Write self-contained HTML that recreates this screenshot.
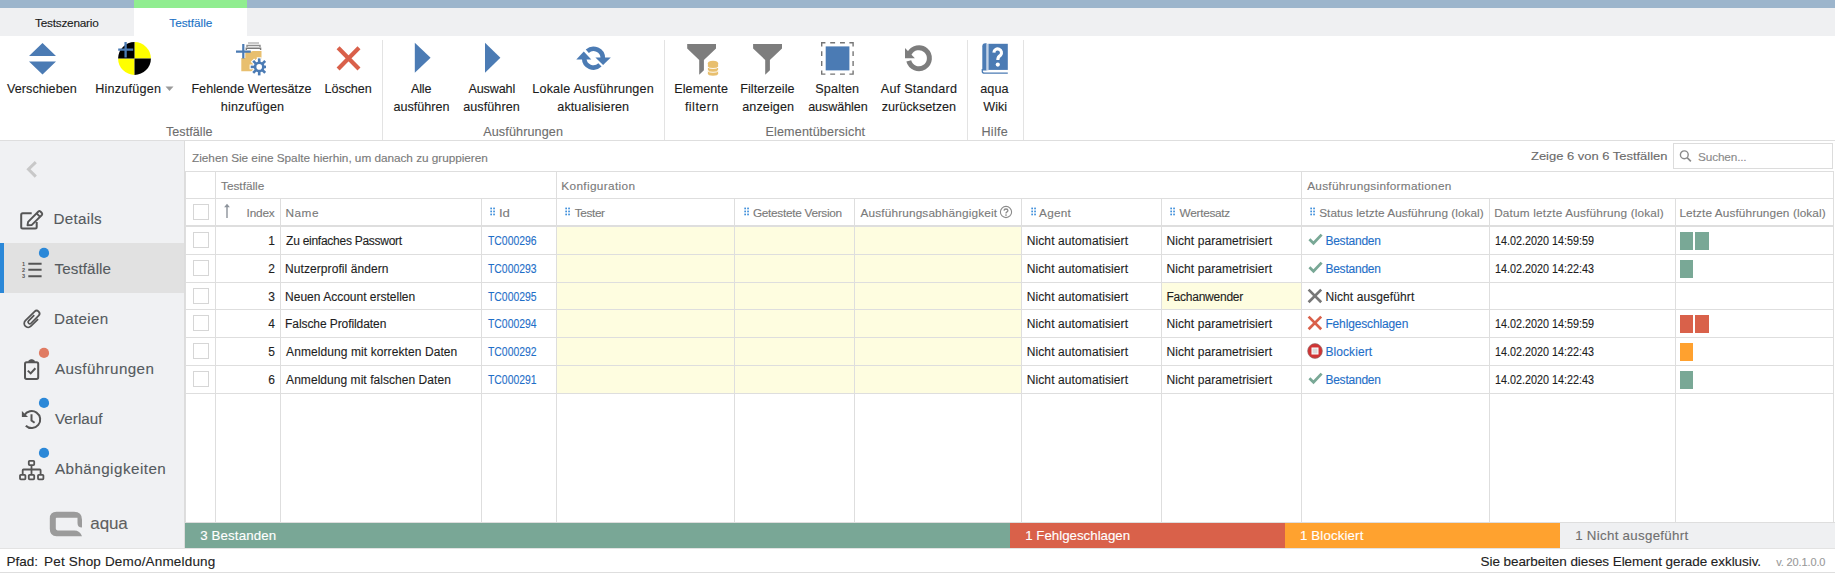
<!DOCTYPE html>
<html><head><meta charset="utf-8"><title>Testfälle</title>
<style>
html,body{margin:0;padding:0}
body{width:1835px;height:573px;position:relative;overflow:hidden;background:#fff;font-family:"Liberation Sans",sans-serif}
.r{position:absolute;display:block}
.t{position:absolute;white-space:nowrap;font-family:"Liberation Sans",sans-serif;-webkit-text-stroke:0.12px currentColor}
</style></head><body>
<div class="r" style="left:0px;top:0px;width:1835px;height:8px;background:#9cb5cc;"></div>
<div class="r" style="left:134px;top:0px;width:113px;height:8px;background:#90ed90;"></div>
<div class="r" style="left:0px;top:8px;width:1835px;height:28px;background:#eff0f2;"></div>
<div class="r" style="left:134px;top:8px;width:113px;height:28px;background:#ffffff;"></div>
<div class="r" style="left:0px;top:140px;width:1835px;height:1px;background:#dedede;"></div>
<div class="r" style="left:382px;top:40px;width:1px;height:100px;background:#e3e3e3;"></div>
<div class="r" style="left:664px;top:40px;width:1px;height:100px;background:#e3e3e3;"></div>
<div class="r" style="left:967px;top:40px;width:1px;height:100px;background:#e3e3e3;"></div>
<div class="r" style="left:1023px;top:40px;width:1px;height:100px;background:#e3e3e3;"></div>
<div class="r" style="left:0px;top:141px;width:184px;height:407px;background:#f0f1f3;"></div>
<div class="r" style="left:184px;top:141px;width:1px;height:407px;background:#dcdcdc;"></div>
<div class="r" style="left:0px;top:243px;width:184px;height:50px;background:#e1e1e1;"></div>
<div class="r" style="left:0px;top:243px;width:4px;height:50px;background:#2b88d8;"></div>
<div class="r" style="left:185px;top:141px;width:1650px;height:30px;background:#ffffff;"></div>
<div class="r" style="left:185px;top:171px;width:1648px;height:1px;background:#dedede;"></div>
<div class="r" style="left:185px;top:171px;width:1px;height:351px;background:#dedede;"></div>
<div class="r" style="left:1833px;top:171px;width:1px;height:351px;background:#dedede;"></div>
<div class="r" style="left:186px;top:198px;width:1647px;height:1px;background:#dedede;"></div>
<div class="r" style="left:186px;top:225px;width:1647px;height:2px;background:#dedede;"></div>
<div class="r" style="left:185px;top:522px;width:1650px;height:1px;background:#dedede;"></div>
<div class="r" style="left:215px;top:172px;width:1px;height:26px;background:#dedede;"></div>
<div class="r" style="left:556px;top:172px;width:1px;height:26px;background:#dedede;"></div>
<div class="r" style="left:1301px;top:172px;width:1px;height:26px;background:#dedede;"></div>
<div class="r" style="left:215px;top:199px;width:1px;height:323px;background:#dedede;"></div>
<div class="r" style="left:280px;top:199px;width:1px;height:323px;background:#dedede;"></div>
<div class="r" style="left:481px;top:199px;width:1px;height:323px;background:#dedede;"></div>
<div class="r" style="left:556px;top:199px;width:1px;height:323px;background:#dedede;"></div>
<div class="r" style="left:734px;top:199px;width:1px;height:323px;background:#dedede;"></div>
<div class="r" style="left:854px;top:199px;width:1px;height:323px;background:#dedede;"></div>
<div class="r" style="left:1021px;top:199px;width:1px;height:323px;background:#dedede;"></div>
<div class="r" style="left:1161px;top:199px;width:1px;height:323px;background:#dedede;"></div>
<div class="r" style="left:1301px;top:199px;width:1px;height:323px;background:#dedede;"></div>
<div class="r" style="left:1489px;top:199px;width:1px;height:323px;background:#dedede;"></div>
<div class="r" style="left:1675px;top:199px;width:1px;height:323px;background:#dedede;"></div>
<div class="r" style="left:557px;top:227px;width:177px;height:27px;background:#fefde0;"></div>
<div class="r" style="left:735px;top:227px;width:119px;height:27px;background:#fefde0;"></div>
<div class="r" style="left:855px;top:227px;width:166px;height:27px;background:#fefde0;"></div>
<div class="r" style="left:557px;top:255px;width:177px;height:27px;background:#fefde0;"></div>
<div class="r" style="left:735px;top:255px;width:119px;height:27px;background:#fefde0;"></div>
<div class="r" style="left:855px;top:255px;width:166px;height:27px;background:#fefde0;"></div>
<div class="r" style="left:557px;top:283px;width:177px;height:26px;background:#fefde0;"></div>
<div class="r" style="left:735px;top:283px;width:119px;height:26px;background:#fefde0;"></div>
<div class="r" style="left:855px;top:283px;width:166px;height:26px;background:#fefde0;"></div>
<div class="r" style="left:1162px;top:283px;width:139px;height:26px;background:#fefde0;"></div>
<div class="r" style="left:557px;top:310px;width:177px;height:27px;background:#fefde0;"></div>
<div class="r" style="left:735px;top:310px;width:119px;height:27px;background:#fefde0;"></div>
<div class="r" style="left:855px;top:310px;width:166px;height:27px;background:#fefde0;"></div>
<div class="r" style="left:557px;top:338px;width:177px;height:27px;background:#fefde0;"></div>
<div class="r" style="left:735px;top:338px;width:119px;height:27px;background:#fefde0;"></div>
<div class="r" style="left:855px;top:338px;width:166px;height:27px;background:#fefde0;"></div>
<div class="r" style="left:557px;top:366px;width:177px;height:27px;background:#fefde0;"></div>
<div class="r" style="left:735px;top:366px;width:119px;height:27px;background:#fefde0;"></div>
<div class="r" style="left:855px;top:366px;width:166px;height:27px;background:#fefde0;"></div>
<div class="r" style="left:186px;top:254px;width:1647px;height:1px;background:#dedede;"></div>
<div class="r" style="left:186px;top:282px;width:1647px;height:1px;background:#dedede;"></div>
<div class="r" style="left:186px;top:309px;width:1647px;height:1px;background:#dedede;"></div>
<div class="r" style="left:186px;top:337px;width:1647px;height:1px;background:#dedede;"></div>
<div class="r" style="left:186px;top:365px;width:1647px;height:1px;background:#dedede;"></div>
<div class="r" style="left:186px;top:393px;width:1647px;height:1px;background:#dedede;"></div>
<div class="r" style="left:193px;top:204px;width:14px;height:14px;background:#fff;border:1px solid #d6d6d6;box-sizing:content-box;"></div>
<div class="r" style="left:193px;top:232px;width:14px;height:14px;background:#fff;border:1px solid #d6d6d6;box-sizing:content-box;"></div>
<div class="r" style="left:193px;top:260px;width:14px;height:14px;background:#fff;border:1px solid #d6d6d6;box-sizing:content-box;"></div>
<div class="r" style="left:193px;top:288px;width:14px;height:14px;background:#fff;border:1px solid #d6d6d6;box-sizing:content-box;"></div>
<div class="r" style="left:193px;top:315px;width:14px;height:14px;background:#fff;border:1px solid #d6d6d6;box-sizing:content-box;"></div>
<div class="r" style="left:193px;top:343px;width:14px;height:14px;background:#fff;border:1px solid #d6d6d6;box-sizing:content-box;"></div>
<div class="r" style="left:193px;top:371px;width:14px;height:14px;background:#fff;border:1px solid #d6d6d6;box-sizing:content-box;"></div>
<svg class="r" style="left:490px;top:207px;" width="5" height="9" viewBox="0 0 5 9"><rect x="0.3" y="0.6" width="1.7" height="1.7" fill="#3f8fdb"/><rect x="0.3" y="3.6" width="1.7" height="1.7" fill="#3f8fdb"/><rect x="0.3" y="6.6" width="1.7" height="1.7" fill="#3f8fdb"/><rect x="3.2" y="0.6" width="1.7" height="1.7" fill="#3f8fdb"/><rect x="3.2" y="3.6" width="1.7" height="1.7" fill="#3f8fdb"/><rect x="3.2" y="6.6" width="1.7" height="1.7" fill="#3f8fdb"/></svg>
<svg class="r" style="left:565px;top:207px;" width="5" height="9" viewBox="0 0 5 9"><rect x="0.3" y="0.6" width="1.7" height="1.7" fill="#3f8fdb"/><rect x="0.3" y="3.6" width="1.7" height="1.7" fill="#3f8fdb"/><rect x="0.3" y="6.6" width="1.7" height="1.7" fill="#3f8fdb"/><rect x="3.2" y="0.6" width="1.7" height="1.7" fill="#3f8fdb"/><rect x="3.2" y="3.6" width="1.7" height="1.7" fill="#3f8fdb"/><rect x="3.2" y="6.6" width="1.7" height="1.7" fill="#3f8fdb"/></svg>
<svg class="r" style="left:743.5px;top:207px;" width="5" height="9" viewBox="0 0 5 9"><rect x="0.3" y="0.6" width="1.7" height="1.7" fill="#3f8fdb"/><rect x="0.3" y="3.6" width="1.7" height="1.7" fill="#3f8fdb"/><rect x="0.3" y="6.6" width="1.7" height="1.7" fill="#3f8fdb"/><rect x="3.2" y="0.6" width="1.7" height="1.7" fill="#3f8fdb"/><rect x="3.2" y="3.6" width="1.7" height="1.7" fill="#3f8fdb"/><rect x="3.2" y="6.6" width="1.7" height="1.7" fill="#3f8fdb"/></svg>
<svg class="r" style="left:1030.5px;top:207px;" width="5" height="9" viewBox="0 0 5 9"><rect x="0.3" y="0.6" width="1.7" height="1.7" fill="#3f8fdb"/><rect x="0.3" y="3.6" width="1.7" height="1.7" fill="#3f8fdb"/><rect x="0.3" y="6.6" width="1.7" height="1.7" fill="#3f8fdb"/><rect x="3.2" y="0.6" width="1.7" height="1.7" fill="#3f8fdb"/><rect x="3.2" y="3.6" width="1.7" height="1.7" fill="#3f8fdb"/><rect x="3.2" y="6.6" width="1.7" height="1.7" fill="#3f8fdb"/></svg>
<svg class="r" style="left:1170px;top:207px;" width="5" height="9" viewBox="0 0 5 9"><rect x="0.3" y="0.6" width="1.7" height="1.7" fill="#3f8fdb"/><rect x="0.3" y="3.6" width="1.7" height="1.7" fill="#3f8fdb"/><rect x="0.3" y="6.6" width="1.7" height="1.7" fill="#3f8fdb"/><rect x="3.2" y="0.6" width="1.7" height="1.7" fill="#3f8fdb"/><rect x="3.2" y="3.6" width="1.7" height="1.7" fill="#3f8fdb"/><rect x="3.2" y="6.6" width="1.7" height="1.7" fill="#3f8fdb"/></svg>
<svg class="r" style="left:1310px;top:207px;" width="5" height="9" viewBox="0 0 5 9"><rect x="0.3" y="0.6" width="1.7" height="1.7" fill="#3f8fdb"/><rect x="0.3" y="3.6" width="1.7" height="1.7" fill="#3f8fdb"/><rect x="0.3" y="6.6" width="1.7" height="1.7" fill="#3f8fdb"/><rect x="3.2" y="0.6" width="1.7" height="1.7" fill="#3f8fdb"/><rect x="3.2" y="3.6" width="1.7" height="1.7" fill="#3f8fdb"/><rect x="3.2" y="6.6" width="1.7" height="1.7" fill="#3f8fdb"/></svg>
<svg class="r" style="left:223px;top:203px;" width="8" height="16" viewBox="0 0 8 16"><path d="M4 0.8 L6.9 4.3 L4.7 4.3 L4.7 15 L3.3 15 L3.3 4.3 L1.1 4.3 Z" fill="#8d939b"/></svg>
<svg class="r" style="left:999px;top:205px;" width="14" height="14" viewBox="0 0 14 14"><circle cx="7" cy="7" r="5.6" fill="none" stroke="#8a8a8a" stroke-width="1.1"/><path d="M5 5.6 Q5.1 4 7 4 Q8.9 4 8.9 5.5 Q8.9 6.5 7.7 7.1 Q7 7.5 7 8.4" fill="none" stroke="#8a8a8a" stroke-width="1.3"/><circle cx="7" cy="10" r="0.85" fill="#8a8a8a"/></svg>
<div class="r" style="left:1673px;top:143px;width:158px;height:24px;background:#fff;border:1px solid #dcdcdc;box-sizing:content-box;"></div>
<svg class="r" style="left:1678px;top:149px;" width="16" height="16" viewBox="0 0 16 16"><circle cx="6.3" cy="5.8" r="3.9" fill="none" stroke="#8a8a8a" stroke-width="1.4"/><path d="M9.1 8.7 L12.9 12.3" stroke="#8a8a8a" stroke-width="1.6"/></svg>
<svg class="r" style="left:1307px;top:231px;" width="17" height="16" viewBox="0 0 17 16"><path d="M2.4 8.3 L6.5 12.2 L14.6 3.6" fill="none" stroke="#79a896" stroke-width="2.8"/></svg>
<svg class="r" style="left:1307px;top:259px;" width="17" height="16" viewBox="0 0 17 16"><path d="M2.4 8.3 L6.5 12.2 L14.6 3.6" fill="none" stroke="#79a896" stroke-width="2.8"/></svg>
<svg class="r" style="left:1306px;top:287px;" width="18" height="18" viewBox="0 0 18 18"><path d="M2.6 2.6 L15.2 15.2 M15.2 2.6 L2.6 15.2" stroke="#777" stroke-width="2.7"/></svg>
<svg class="r" style="left:1306px;top:314px;" width="18" height="18" viewBox="0 0 18 18"><path d="M2.6 2.6 L15.2 15.2 M15.2 2.6 L2.6 15.2" stroke="#d9604a" stroke-width="2.7"/></svg>
<svg class="r" style="left:1306px;top:342px;" width="18" height="18" viewBox="0 0 18 18"><circle cx="9" cy="9" r="7.4" fill="#d03434" stroke="#8a7070" stroke-width="0.6"/><rect x="6" y="6" width="6" height="6" fill="#dcdcdc" stroke="#fff" stroke-width="1"/></svg>
<svg class="r" style="left:1307px;top:370px;" width="17" height="16" viewBox="0 0 17 16"><path d="M2.4 8.3 L6.5 12.2 L14.6 3.6" fill="none" stroke="#79a896" stroke-width="2.8"/></svg>
<div class="r" style="left:1680px;top:232px;width:13px;height:18px;background:#79a896;"></div>
<div class="r" style="left:1695px;top:232px;width:14px;height:18px;background:#79a896;"></div>
<div class="r" style="left:1680px;top:260px;width:13px;height:18px;background:#79a896;"></div>
<div class="r" style="left:1680px;top:315px;width:13px;height:18px;background:#d9614a;"></div>
<div class="r" style="left:1695px;top:315px;width:14px;height:18px;background:#d9614a;"></div>
<div class="r" style="left:1680px;top:343px;width:13px;height:18px;background:#ffa12f;"></div>
<div class="r" style="left:1680px;top:371px;width:13px;height:18px;background:#79a896;"></div>
<div class="r" style="left:185px;top:523px;width:825px;height:25px;background:#79a796;"></div>
<div class="r" style="left:1010px;top:523px;width:275px;height:25px;background:#d9614a;"></div>
<div class="r" style="left:1285px;top:523px;width:275px;height:25px;background:#ffa22f;"></div>
<div class="r" style="left:1560px;top:523px;width:275px;height:25px;background:#eff0f2;"></div>
<div class="r" style="left:0px;top:548px;width:1835px;height:25px;background:#ffffff;"></div>
<div class="r" style="left:0px;top:548px;width:1835px;height:1px;background:#e3e3e3;"></div>
<div class="r" style="left:0px;top:572px;width:1835px;height:1px;background:#dedede;"></div>
<svg class="r" style="left:28px;top:42px;" width="30" height="34" viewBox="0 0 30 34"><path d="M1 14 L14.5 1 L28 14 Z M1 19.4 L28 19.4 L14.5 32.6 Z" fill="#4b7bb4"/></svg>
<svg class="r" style="left:117px;top:41px;" width="36" height="36" viewBox="0 0 36 36"><path d="M17.5 17.5 L17.5 1.1 A16.4 16.4 0 0 1 33.9 17.5 Z" fill="#ffff00"/><path d="M17.5 17.5 L1.1 17.5 A16.4 16.4 0 0 0 17.5 33.9 Z" fill="#ffff00"/><path d="M17.5 17.5 L17.5 1.1 A16.4 16.4 0 0 0 1.1 17.5 Z" fill="#000"/><path d="M17.5 17.5 L33.9 17.5 A16.4 16.4 0 0 1 17.5 33.9 Z" fill="#000"/><path d="M1.2 8.7 L16.2 8.7 M8.6 1 L8.6 16.4" stroke="#4b7bb4" stroke-width="2.3"/></svg>
<svg class="r" style="left:165px;top:86px;" width="9" height="6" viewBox="0 0 9 6"><path d="M0.5 0.5 L8.5 0.5 L4.5 5 Z" fill="#9a9a9a"/></svg>
<svg class="r" style="left:234px;top:40px;" width="32" height="38" viewBox="0 0 32 38"><path d="M14 3 L25 3" stroke="#bdbdbd" stroke-width="1.6"/><path d="M13 7 L13 5.5 L26 5.5 L26 7" fill="none" stroke="#8f8f8f" stroke-width="1.4"/><path d="M12.3 10 L12.3 8.3 L26.6 8.3 L26.6 10" fill="none" stroke="#7a7a7a" stroke-width="1.4"/><path d="M11.3 10.9 L16.5 10.9 Q17.5 12.3 18.5 10.9 L27.5 10.9 L27.5 19 L22 19 L22 31.2 L7.3 31.2 L7.3 17.9 L11.3 17.9 Z" fill="#e8bf6f"/><path d="M2 11.6 L16.7 11.6 M9.3 4 L9.3 18.6" stroke="#4b7bb4" stroke-width="2.2"/><g transform="translate(25.2,26.9)"><g fill="#fff" stroke="#fff" stroke-width="2.2"><rect x="-1.3" y="-8.5" width="2.6" height="4.5" transform="rotate(0)"/><rect x="-1.3" y="-8.5" width="2.6" height="4.5" transform="rotate(45)"/><rect x="-1.3" y="-8.5" width="2.6" height="4.5" transform="rotate(90)"/><rect x="-1.3" y="-8.5" width="2.6" height="4.5" transform="rotate(135)"/><rect x="-1.3" y="-8.5" width="2.6" height="4.5" transform="rotate(180)"/><rect x="-1.3" y="-8.5" width="2.6" height="4.5" transform="rotate(225)"/><rect x="-1.3" y="-8.5" width="2.6" height="4.5" transform="rotate(270)"/><rect x="-1.3" y="-8.5" width="2.6" height="4.5" transform="rotate(315)"/><circle r="5.4"/></g><g fill="#4b7bb4"><rect x="-1.3" y="-8.5" width="2.6" height="4.5" transform="rotate(0)"/><rect x="-1.3" y="-8.5" width="2.6" height="4.5" transform="rotate(45)"/><rect x="-1.3" y="-8.5" width="2.6" height="4.5" transform="rotate(90)"/><rect x="-1.3" y="-8.5" width="2.6" height="4.5" transform="rotate(135)"/><rect x="-1.3" y="-8.5" width="2.6" height="4.5" transform="rotate(180)"/><rect x="-1.3" y="-8.5" width="2.6" height="4.5" transform="rotate(225)"/><rect x="-1.3" y="-8.5" width="2.6" height="4.5" transform="rotate(270)"/><rect x="-1.3" y="-8.5" width="2.6" height="4.5" transform="rotate(315)"/><circle r="5.4"/></g><circle r="2.8" fill="#fff"/></g></svg>
<svg class="r" style="left:334px;top:44px;" width="28" height="29" viewBox="0 0 28 29"><path d="M4.1 3.8 L25 25 M25 3.8 L4.1 25" stroke="#d9604a" stroke-width="4.2"/></svg>
<svg class="r" style="left:414px;top:42px;" width="18" height="32" viewBox="0 0 18 32"><path d="M0.8 0.7 L16.6 15.7 L0.8 30.8 Z" fill="#4b7bb4"/></svg>
<svg class="r" style="left:484px;top:42px;" width="18" height="32" viewBox="0 0 18 32"><path d="M1 0.7 L16.4 15.7 L1 30.8 Z" fill="#4b7bb4"/></svg>
<svg class="r" style="left:574px;top:44px;" width="40" height="30" viewBox="0 0 40 30"><path d="M13.28 7.29 A9.3 9.3 0 0 1 28.8 14.2" fill="none" stroke="#4b7bb4" stroke-width="4.6"/><path d="M25.96 20.89 A9.3 9.3 0 0 1 10.2 14.2" fill="none" stroke="#4b7bb4" stroke-width="4.6"/><path d="M21.4 13.6 L36.8 13.6 L29.1 21.1 Z" fill="#4b7bb4"/><path d="M2.3 15.5 L17.3 15.5 L9.8 7.6 Z" fill="#4b7bb4"/></svg>
<svg class="r" style="left:686px;top:43px;" width="34" height="34" viewBox="0 0 34 34"><path d="M1.2 1.1 L30 1.1 L30 5.6 L17.9 16.9 L17.9 27.2 L13.2 31.8 L13.2 16.9 L1.2 5.6 Z" fill="#7d7d7d"/><g fill="#e8bf6e"><ellipse cx="27" cy="20.3" rx="5.1" ry="2.6"/><rect x="21.9" y="20.3" width="10.2" height="3.6"/><ellipse cx="27" cy="24.9" rx="5.1" ry="2.2"/><rect x="21.9" y="24.9" width="10.2" height="2.4"/><ellipse cx="27" cy="28.6" rx="5.1" ry="2.2"/><rect x="21.9" y="28.6" width="10.2" height="2.2"/><ellipse cx="27" cy="30.6" rx="5.1" ry="2.2"/></g><path d="M22 24.2 A5.1 1.6 0 0 0 32 24.2 M22 28 A5.1 1.6 0 0 0 32 28" fill="none" stroke="#fff" stroke-width="0.9"/></svg>
<svg class="r" style="left:752px;top:43px;" width="32" height="34" viewBox="0 0 32 34"><path d="M1.1 1.1 L30 1.1 L30 5.6 L17.9 16.9 L17.9 27.2 L13.2 31.8 L13.2 16.9 L1.1 5.6 Z" fill="#7d7d7d"/></svg>
<svg class="r" style="left:820px;top:41px;" width="35" height="35" viewBox="0 0 35 35"><path d="M1.7 5.4 L1.7 1.7 L5.4 1.7 M29.4 1.7 L33.1 1.7 L33.1 5.4 M33.1 29.4 L33.1 33.1 L29.4 33.1 M5.4 33.1 L1.7 33.1 L1.7 29.4 M10.2 1.7 L15.1 1.7 M20 1.7 L24.9 1.7 M10.2 33.1 L15.1 33.1 M20 33.1 L24.9 33.1 M1.7 10.3 L1.7 15.1 M1.7 20 L1.7 24.9 M33.1 10.3 L33.1 15.1 M33.1 20 L33.1 24.9" fill="none" stroke="#767676" stroke-width="1.4"/><rect x="5.7" y="5.4" width="23.7" height="24" fill="#4b7bb4"/></svg>
<svg class="r" style="left:902px;top:42px;" width="34" height="34" viewBox="0 0 34 34"><path d="M6.76 18.92 A10.5 10.5 0 1 0 7.38 11.76" fill="none" stroke="#7d7d7d" stroke-width="5"/><path d="M3 5.95 L3 16.2 L12.9 16.2 Z" fill="#7d7d7d"/></svg>
<svg class="r" style="left:981px;top:42px;" width="28" height="33" viewBox="0 0 28 33"><path d="M1.3 4.3 Q1.3 1.3 4.3 1.3 L5.6 1.3 L5.6 28.4 L1.3 28.4 Z" fill="#4b7bb4"/><rect x="5.6" y="1.8" width="1.9" height="26.6" fill="#c2d2e6"/><rect x="7.5" y="1.8" width="19.3" height="26.1" fill="#4b7bb4"/><path d="M1.3 27 L1.3 29.5 Q1.3 31.2 3.5 31.2 L26.8 31.2" fill="none" stroke="#4b7bb4" stroke-width="1.3"/><path d="M12.9 10.6 A3.8 3.8 0 1 1 19.6 13.2 Q16.8 14.8 16.8 18" fill="none" stroke="#fff" stroke-width="3.1"/><circle cx="16.8" cy="22.6" r="2.1" fill="#fff"/></svg>
<svg class="r" style="left:24px;top:159px;" width="16" height="22" viewBox="0 0 16 22"><path d="M11.8 3.2 L4.5 10.2 L11.8 17.6" fill="none" stroke="#c8c8c8" stroke-width="3"/></svg>
<svg class="r" style="left:18px;top:208px;" width="28" height="25" viewBox="0 0 28 25"><path d="M13.7 5.3 L4.7 5.3 Q3.2 5.3 3.2 6.8 L3.2 19.1 Q3.2 20.6 4.7 20.6 L17.2 20.6 Q18.7 20.6 18.7 19.1 L18.7 14" fill="none" stroke="#555555" stroke-width="2"/><path d="M9.5 17.3 L10.1 13.8 L20.4 3.5 Q21.4 2.7 22.4 3.5 L23.9 5 Q24.7 6 23.9 7 L13.6 17.1 Z M18.6 5.3 L22.1 8.8" fill="none" stroke="#555555" stroke-width="1.9" stroke-linejoin="round"/></svg>
<svg class="r" style="left:19px;top:258px;" width="26" height="22" viewBox="0 0 26 22"><path d="M9.3 5.7 L22.6 5.7 M9.3 11.8 L22.6 11.8 M9.3 18.3 L22.6 18.3" stroke="#555555" stroke-width="2.1"/><text x="4.5" y="8.2" font-size="5.6" font-family="Liberation Sans" font-weight="bold" fill="#555555" text-anchor="middle">1</text><text x="4.5" y="14.2" font-size="5.6" font-family="Liberation Sans" font-weight="bold" fill="#555555" text-anchor="middle">2</text><text x="4.5" y="20.2" font-size="5.6" font-family="Liberation Sans" font-weight="bold" fill="#555555" text-anchor="middle">3</text></svg>
<svg class="r" style="left:38px;top:247px;" width="12" height="12" viewBox="0 0 12 12"><circle cx="6" cy="5.90" r="5.1" fill="#2b88d8"/></svg>
<svg class="r" style="left:38px;top:347px;" width="12" height="12" viewBox="0 0 12 12"><circle cx="6" cy="5.90" r="5.1" fill="#e07b62"/></svg>
<svg class="r" style="left:38px;top:397px;" width="12" height="12" viewBox="0 0 12 12"><circle cx="6" cy="5.90" r="5.1" fill="#2b88d8"/></svg>
<svg class="r" style="left:38px;top:447px;" width="12" height="12" viewBox="0 0 12 12"><circle cx="6" cy="5.90" r="5.1" fill="#2b88d8"/></svg>
<svg class="r" style="left:19px;top:306px;" width="26" height="28" viewBox="0 0 26 28"><g transform="rotate(45 13 14)"><path d="M16.6 9 L16.6 19.2 A3.9 3.9 0 0 1 8.8 19.2 L8.8 6.2 A2.9 2.9 0 0 1 14.6 6.2 L14.6 17 A1.7 1.7 0 0 1 11.2 17 L11.2 9" fill="none" stroke="#555555" stroke-width="1.75"/></g></svg>
<svg class="r" style="left:22px;top:358px;" width="19" height="24" viewBox="0 0 19 24"><rect x="3" y="4.3" width="13.2" height="16.6" rx="1.6" fill="none" stroke="#555555" stroke-width="2"/><path d="M7 4.3 L7 3 Q9.6 0.6 12.2 3 L12.2 4.3 Z" fill="#555555" stroke="#555555" stroke-width="1.2"/><path d="M5.8 12.6 L8.7 15.4 L13.4 10.3" fill="none" stroke="#555555" stroke-width="2"/></svg>
<svg class="r" style="left:20px;top:408px;" width="26" height="24" viewBox="0 0 26 24"><path d="M4.34 7.35 A8.5 8.5 0 1 1 5.8 17.71" fill="none" stroke="#555555" stroke-width="2"/><path d="M1.9 3 L1.9 8.9 L8 8.9 Z" fill="#555555"/><path d="M11.5 6.2 L11.5 12.5 L14.6 14.8" fill="none" stroke="#555555" stroke-width="2"/></svg>
<svg class="r" style="left:17px;top:458px;" width="30" height="24" viewBox="0 0 30 24"><g fill="none" stroke="#555555" stroke-width="1.8"><rect x="11.8" y="2.8" width="5.4" height="4.3" rx="0.8"/><rect x="3" y="16.8" width="5.4" height="4.6" rx="0.8"/><rect x="11.8" y="16.8" width="5.4" height="4.6" rx="0.8"/><rect x="21" y="16.8" width="5.4" height="4.6" rx="0.8"/><path d="M14.5 7.1 L14.5 16.8 M5.7 16.8 L5.7 12.3 Q5.7 11.5 6.5 11.5 L22.8 11.5 Q23.6 11.5 23.6 12.3 L23.6 16.8"/></g></svg>
<svg class="r" style="left:48px;top:510px;" width="36" height="28" viewBox="0 0 36 28"><path d="M8.5 1.8 L26 1.8 Q34 1.8 34 9.8 L34 17.6 Q29.5 17.6 29.5 13 L29.5 7.8 Q29.5 7.8 27 7.8 L8.6 7.8 Q7.8 7.8 7.8 8.6 L7.8 18.6 Q7.8 20.4 9.6 20.4 L26.2 20.4 Q32 20.4 34 26.2 L8.6 26.2 Q1.8 26.2 1.8 18.8 L1.8 8.6 Q1.8 1.8 8.5 1.8 Z" fill="#9b9b9b"/></svg>
<div class="t" style="top:18.00px;font-size:11.8px;line-height:11.8px;color:#1b1b1b;left:35.00px;letter-spacing:-0.227px;">Testszenario</div>
<div class="t" style="top:18.00px;font-size:11.8px;line-height:11.8px;color:#1b72c6;left:169.30px;letter-spacing:-0.025px;">Testfälle</div>
<div class="t" style="top:83.00px;font-size:12.6px;line-height:12.6px;color:#1c1c1c;left:7.10px;letter-spacing:0.030px;">Verschieben</div>
<div class="t" style="top:83.00px;font-size:12.6px;line-height:12.6px;color:#1c1c1c;left:95.30px;letter-spacing:0.211px;">Hinzufügen</div>
<div class="t" style="top:83.00px;font-size:12.6px;line-height:12.6px;color:#1c1c1c;left:191.40px;letter-spacing:0.033px;">Fehlende Wertesätze</div>
<div class="t" style="top:101.00px;font-size:12.6px;line-height:12.6px;color:#1c1c1c;left:220.70px;letter-spacing:0.200px;">hinzufügen</div>
<div class="t" style="top:83.00px;font-size:12.6px;line-height:12.6px;color:#1c1c1c;left:324.60px;letter-spacing:-0.083px;">Löschen</div>
<div class="t" style="top:83.00px;font-size:12.6px;line-height:12.6px;color:#1c1c1c;left:411.00px;letter-spacing:-0.200px;">Alle</div>
<div class="t" style="top:101.00px;font-size:12.6px;line-height:12.6px;color:#1c1c1c;left:393.40px;letter-spacing:0.013px;">ausführen</div>
<div class="t" style="top:83.00px;font-size:12.6px;line-height:12.6px;color:#1c1c1c;left:468.50px;letter-spacing:-0.150px;">Auswahl</div>
<div class="t" style="top:101.00px;font-size:12.6px;line-height:12.6px;color:#1c1c1c;left:463.20px;letter-spacing:0.075px;">ausführen</div>
<div class="t" style="top:83.00px;font-size:12.6px;line-height:12.6px;color:#1c1c1c;left:532.30px;letter-spacing:0.172px;">Lokale Ausführungen</div>
<div class="t" style="top:101.00px;font-size:12.6px;line-height:12.6px;color:#1c1c1c;left:557.30px;letter-spacing:0.092px;">aktualisieren</div>
<div class="t" style="top:83.00px;font-size:12.6px;line-height:12.6px;color:#1c1c1c;left:674.30px;letter-spacing:0.057px;">Elemente</div>
<div class="t" style="top:101.00px;font-size:12.6px;line-height:12.6px;color:#1c1c1c;left:684.90px;letter-spacing:0.467px;">filtern</div>
<div class="t" style="top:83.00px;font-size:12.6px;line-height:12.6px;color:#1c1c1c;left:740.20px;letter-spacing:0.050px;">Filterzeile</div>
<div class="t" style="top:101.00px;font-size:12.6px;line-height:12.6px;color:#1c1c1c;left:742.20px;letter-spacing:0.100px;">anzeigen</div>
<div class="t" style="top:83.00px;font-size:12.6px;line-height:12.6px;color:#1c1c1c;left:815.20px;letter-spacing:0.200px;">Spalten</div>
<div class="t" style="top:101.00px;font-size:12.6px;line-height:12.6px;color:#1c1c1c;left:808.20px;letter-spacing:-0.088px;">auswählen</div>
<div class="t" style="top:83.00px;font-size:12.6px;line-height:12.6px;color:#1c1c1c;left:880.80px;letter-spacing:0.236px;">Auf Standard</div>
<div class="t" style="top:101.00px;font-size:12.6px;line-height:12.6px;color:#1c1c1c;left:881.80px;">zurücksetzen</div>
<div class="t" style="top:83.00px;font-size:12.6px;line-height:12.6px;color:#1c1c1c;left:980.30px;letter-spacing:0.067px;">aqua</div>
<div class="t" style="top:101.00px;font-size:12.6px;line-height:12.6px;color:#1c1c1c;left:983.30px;letter-spacing:-0.033px;">Wiki</div>
<div class="t" style="top:126.00px;font-size:12.6px;line-height:12.6px;color:#6e6e6e;left:166.00px;letter-spacing:0.037px;">Testfälle</div>
<div class="t" style="top:126.00px;font-size:12.6px;line-height:12.6px;color:#6e6e6e;left:483.20px;letter-spacing:0.127px;">Ausführungen</div>
<div class="t" style="top:126.00px;font-size:12.6px;line-height:12.6px;color:#6e6e6e;left:765.40px;letter-spacing:0.160px;">Elementübersicht</div>
<div class="t" style="top:126.00px;font-size:12.6px;line-height:12.6px;color:#6e6e6e;left:981.40px;letter-spacing:0.300px;">Hilfe</div>
<div class="t" style="top:211.00px;font-size:15.2px;line-height:15.2px;color:#555a5e;left:53.60px;letter-spacing:0.267px;">Details</div>
<div class="t" style="top:261.00px;font-size:15.2px;line-height:15.2px;color:#555a5e;left:54.60px;letter-spacing:0.088px;">Testfälle</div>
<div class="t" style="top:311.00px;font-size:15.2px;line-height:15.2px;color:#555a5e;left:53.90px;letter-spacing:0.333px;">Dateien</div>
<div class="t" style="top:361.00px;font-size:15.2px;line-height:15.2px;color:#555a5e;left:54.90px;letter-spacing:0.400px;">Ausführungen</div>
<div class="t" style="top:411.00px;font-size:15.2px;line-height:15.2px;color:#555a5e;left:54.90px;letter-spacing:0.067px;">Verlauf</div>
<div class="t" style="top:461.00px;font-size:15.2px;line-height:15.2px;color:#555a5e;left:54.90px;letter-spacing:0.477px;">Abhängigkeiten</div>
<div class="t" style="top:515.00px;font-size:17px;line-height:17px;color:#5f5f5f;left:90.30px;letter-spacing:-0.100px;">aqua</div>
<div class="t" style="top:153.00px;font-size:11.8px;line-height:11.8px;color:#7a7a7a;left:192.10px;letter-spacing:-0.037px;">Ziehen Sie eine Spalte hierhin, um danach zu gruppieren</div>
<div class="t" style="top:151.00px;font-size:11.8px;line-height:11.8px;color:#6a6a6a;left:1531.20px;transform:scaleX(1.0968);transform-origin:0px 0;">Zeige 6 von 6 Testfällen</div>
<div class="t" style="top:152.00px;font-size:11.8px;line-height:11.8px;color:#8a8a8a;left:1698.10px;letter-spacing:-0.162px;">Suchen...</div>
<div class="t" style="top:181.00px;font-size:11.8px;line-height:11.8px;color:#7a7a7a;left:221.00px;">Testfälle</div>
<div class="t" style="top:181.00px;font-size:11.8px;line-height:11.8px;color:#7a7a7a;left:561.30px;letter-spacing:0.350px;">Konfiguration</div>
<div class="t" style="top:181.00px;font-size:11.8px;line-height:11.8px;color:#7a7a7a;left:1307.20px;letter-spacing:0.278px;">Ausführungsinformationen</div>
<div class="t" style="top:208.00px;font-size:11.8px;line-height:11.8px;color:#7a7a7a;left:246.60px;letter-spacing:-0.200px;">Index</div>
<div class="t" style="top:208.00px;font-size:11.8px;line-height:11.8px;color:#7a7a7a;left:285.60px;letter-spacing:0.467px;">Name</div>
<div class="t" style="top:208.00px;font-size:11.8px;line-height:11.8px;color:#7a7a7a;left:498.50px;transform:scaleX(1.1125);transform-origin:1px 0;">Id</div>
<div class="t" style="top:208.00px;font-size:11.8px;line-height:11.8px;color:#7a7a7a;left:574.80px;letter-spacing:-0.380px;">Tester</div>
<div class="t" style="top:208.00px;font-size:11.8px;line-height:11.8px;color:#7a7a7a;left:752.90px;letter-spacing:-0.281px;">Getestete Version</div>
<div class="t" style="top:208.00px;font-size:11.8px;line-height:11.8px;color:#7a7a7a;left:860.50px;letter-spacing:0.150px;">Ausführungsabhängigkeit</div>
<div class="t" style="top:208.00px;font-size:11.8px;line-height:11.8px;color:#7a7a7a;left:1039.10px;letter-spacing:0.200px;">Agent</div>
<div class="t" style="top:208.00px;font-size:11.8px;line-height:11.8px;color:#7a7a7a;left:1179.60px;letter-spacing:-0.287px;">Wertesatz</div>
<div class="t" style="top:208.00px;font-size:11.8px;line-height:11.8px;color:#7a7a7a;left:1319.20px;letter-spacing:0.039px;">Status letzte Ausführung (lokal)</div>
<div class="t" style="top:208.00px;font-size:11.8px;line-height:11.8px;color:#7a7a7a;left:1494.20px;letter-spacing:0.167px;">Datum letzte Ausführung (lokal)</div>
<div class="t" style="top:208.00px;font-size:11.8px;line-height:11.8px;color:#7a7a7a;left:1679.40px;letter-spacing:0.100px;">Letzte Ausführungen (lokal)</div>
<div class="t" style="top:235.00px;font-size:12px;line-height:12px;color:#1e1e1e;right:1560px;">1</div>
<div class="t" style="top:235.00px;font-size:12px;line-height:12px;color:#1e1e1e;left:286.10px;letter-spacing:-0.265px;">Zu einfaches Passwort</div>
<div class="t" style="top:235.00px;font-size:12px;line-height:12px;color:#1f6fc8;left:488.30px;transform:scaleX(0.8661);transform-origin:0px 0;">TC000296</div>
<div class="t" style="top:235.00px;font-size:12px;line-height:12px;color:#1e1e1e;left:1026.70px;letter-spacing:0.111px;">Nicht automatisiert</div>
<div class="t" style="top:235.00px;font-size:12px;line-height:12px;color:#1e1e1e;left:1166.50px;letter-spacing:0.079px;">Nicht parametrisiert</div>
<div class="t" style="top:235.00px;font-size:12px;line-height:12px;color:#1f6fc8;left:1325.40px;letter-spacing:-0.225px;">Bestanden</div>
<div class="t" style="top:235.00px;font-size:12px;line-height:12px;color:#1e1e1e;left:1494.70px;transform:scaleX(0.8991);transform-origin:1px 0;">14.02.2020 14:59:59</div>
<div class="t" style="top:263.00px;font-size:12px;line-height:12px;color:#1e1e1e;right:1560px;">2</div>
<div class="t" style="top:263.00px;font-size:12px;line-height:12px;color:#1e1e1e;left:285.10px;letter-spacing:0.072px;">Nutzerprofil ändern</div>
<div class="t" style="top:263.00px;font-size:12px;line-height:12px;color:#1f6fc8;left:488.30px;transform:scaleX(0.8661);transform-origin:0px 0;">TC000293</div>
<div class="t" style="top:263.00px;font-size:12px;line-height:12px;color:#1e1e1e;left:1026.70px;letter-spacing:0.111px;">Nicht automatisiert</div>
<div class="t" style="top:263.00px;font-size:12px;line-height:12px;color:#1e1e1e;left:1166.50px;letter-spacing:0.079px;">Nicht parametrisiert</div>
<div class="t" style="top:263.00px;font-size:12px;line-height:12px;color:#1f6fc8;left:1325.40px;letter-spacing:-0.225px;">Bestanden</div>
<div class="t" style="top:263.00px;font-size:12px;line-height:12px;color:#1e1e1e;left:1494.70px;transform:scaleX(0.8991);transform-origin:1px 0;">14.02.2020 14:22:43</div>
<div class="t" style="top:291.00px;font-size:12px;line-height:12px;color:#1e1e1e;right:1560px;">3</div>
<div class="t" style="top:291.00px;font-size:12px;line-height:12px;color:#1e1e1e;left:285.10px;">Neuen Account erstellen</div>
<div class="t" style="top:291.00px;font-size:12px;line-height:12px;color:#1f6fc8;left:488.30px;transform:scaleX(0.8661);transform-origin:0px 0;">TC000295</div>
<div class="t" style="top:291.00px;font-size:12px;line-height:12px;color:#1e1e1e;left:1026.70px;letter-spacing:0.111px;">Nicht automatisiert</div>
<div class="t" style="top:291.00px;font-size:12px;line-height:12px;color:#1e1e1e;left:1166.50px;letter-spacing:-0.236px;">Fachanwender</div>
<div class="t" style="top:291.00px;font-size:12px;line-height:12px;color:#1e1e1e;left:1325.40px;letter-spacing:0.100px;">Nicht ausgeführt</div>
<div class="t" style="top:318.00px;font-size:12px;line-height:12px;color:#1e1e1e;right:1560px;">4</div>
<div class="t" style="top:318.00px;font-size:12px;line-height:12px;color:#1e1e1e;left:285.10px;letter-spacing:-0.083px;">Falsche Profildaten</div>
<div class="t" style="top:318.00px;font-size:12px;line-height:12px;color:#1f6fc8;left:488.30px;transform:scaleX(0.8661);transform-origin:0px 0;">TC000294</div>
<div class="t" style="top:318.00px;font-size:12px;line-height:12px;color:#1e1e1e;left:1026.70px;letter-spacing:0.111px;">Nicht automatisiert</div>
<div class="t" style="top:318.00px;font-size:12px;line-height:12px;color:#1e1e1e;left:1166.50px;letter-spacing:0.079px;">Nicht parametrisiert</div>
<div class="t" style="top:318.00px;font-size:12px;line-height:12px;color:#1f6fc8;left:1325.40px;letter-spacing:-0.138px;">Fehlgeschlagen</div>
<div class="t" style="top:318.00px;font-size:12px;line-height:12px;color:#1e1e1e;left:1494.70px;transform:scaleX(0.8991);transform-origin:1px 0;">14.02.2020 14:59:59</div>
<div class="t" style="top:346.00px;font-size:12px;line-height:12px;color:#1e1e1e;right:1560px;">5</div>
<div class="t" style="top:346.00px;font-size:12px;line-height:12px;color:#1e1e1e;left:286.10px;letter-spacing:0.086px;">Anmeldung mit korrekten Daten</div>
<div class="t" style="top:346.00px;font-size:12px;line-height:12px;color:#1f6fc8;left:488.30px;transform:scaleX(0.8661);transform-origin:0px 0;">TC000292</div>
<div class="t" style="top:346.00px;font-size:12px;line-height:12px;color:#1e1e1e;left:1026.70px;letter-spacing:0.111px;">Nicht automatisiert</div>
<div class="t" style="top:346.00px;font-size:12px;line-height:12px;color:#1e1e1e;left:1166.50px;letter-spacing:0.079px;">Nicht parametrisiert</div>
<div class="t" style="top:346.00px;font-size:12px;line-height:12px;color:#1f6fc8;left:1325.40px;letter-spacing:0.088px;">Blockiert</div>
<div class="t" style="top:346.00px;font-size:12px;line-height:12px;color:#1e1e1e;left:1494.70px;transform:scaleX(0.8991);transform-origin:1px 0;">14.02.2020 14:22:43</div>
<div class="t" style="top:374.00px;font-size:12px;line-height:12px;color:#1e1e1e;right:1560px;">6</div>
<div class="t" style="top:374.00px;font-size:12px;line-height:12px;color:#1e1e1e;left:286.10px;letter-spacing:0.048px;">Anmeldung mit falschen Daten</div>
<div class="t" style="top:374.00px;font-size:12px;line-height:12px;color:#1f6fc8;left:488.30px;transform:scaleX(0.8661);transform-origin:0px 0;">TC000291</div>
<div class="t" style="top:374.00px;font-size:12px;line-height:12px;color:#1e1e1e;left:1026.70px;letter-spacing:0.111px;">Nicht automatisiert</div>
<div class="t" style="top:374.00px;font-size:12px;line-height:12px;color:#1e1e1e;left:1166.50px;letter-spacing:0.079px;">Nicht parametrisiert</div>
<div class="t" style="top:374.00px;font-size:12px;line-height:12px;color:#1f6fc8;left:1325.40px;letter-spacing:-0.225px;">Bestanden</div>
<div class="t" style="top:374.00px;font-size:12px;line-height:12px;color:#1e1e1e;left:1494.70px;transform:scaleX(0.8991);transform-origin:1px 0;">14.02.2020 14:22:43</div>
<div class="t" style="top:529.00px;font-size:13.3px;line-height:13.3px;color:#ffffff;left:200.30px;letter-spacing:0.110px;">3 Bestanden</div>
<div class="t" style="top:529.00px;font-size:13.3px;line-height:13.3px;color:#ffffff;left:1025.20px;">1 Fehlgeschlagen</div>
<div class="t" style="top:529.00px;font-size:13.3px;line-height:13.3px;color:#ffffff;left:1300.00px;letter-spacing:0.130px;">1 Blockiert</div>
<div class="t" style="top:529.00px;font-size:13.3px;line-height:13.3px;color:#6f6f6f;left:1575.20px;letter-spacing:0.294px;">1 Nicht ausgeführt</div>
<div class="t" style="top:555.00px;font-size:13.5px;line-height:13.5px;color:#222;left:6.50px;">Pfad:</div>
<div class="t" style="top:555.00px;font-size:13.5px;line-height:13.5px;color:#222;left:44.10px;letter-spacing:0.173px;">Pet Shop Demo/Anmeldung</div>
<div class="t" style="top:555.00px;font-size:13.5px;line-height:13.5px;color:#222;left:1480.50px;letter-spacing:-0.062px;">Sie bearbeiten dieses Element gerade exklusiv.</div>
<div class="t" style="top:557.00px;font-size:11px;line-height:11px;color:#9a9a9a;left:1776.20px;letter-spacing:-0.130px;">v. 20.1.0.0</div>
</body></html>
